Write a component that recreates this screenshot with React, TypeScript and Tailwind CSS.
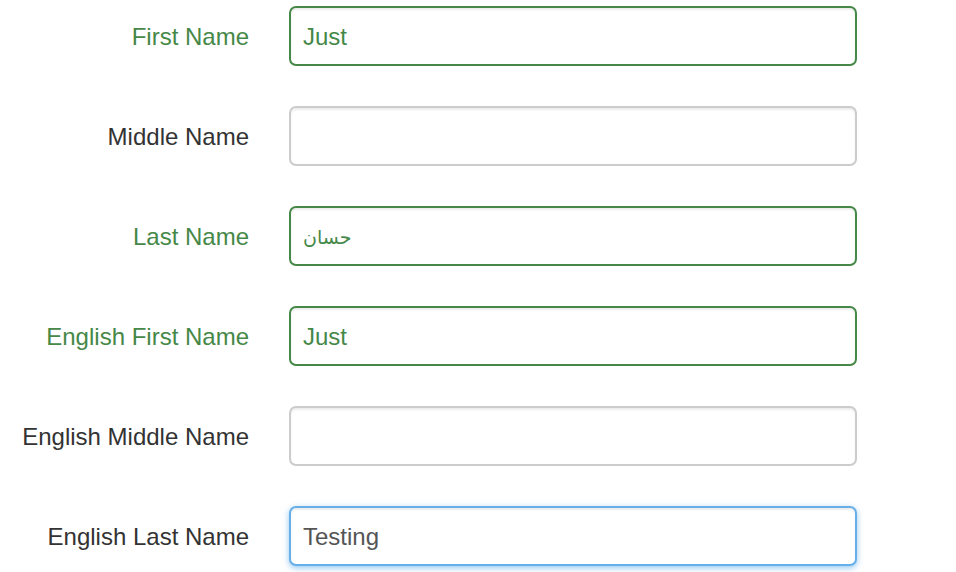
const fields = [
  { label: "First Name", value: "Just", state: "success" },
  { label: "Middle Name", value: "", state: "default" },
  { label: "Last Name", value: "حسان", state: "success", rtlText: true },
  { label: "English First Name", value: "Just", state: "success" },
  { label: "English Middle Name", value: "", state: "default" },
  { label: "English Last Name", value: "Testing", state: "focus" },
];

export default function App() {
  return (
    <div className="w-[956px] h-[572px] overflow-hidden bg-white pt-[6px] font-['Liberation_Sans','DejaVu_Sans',sans-serif]">
      <form className="flex flex-col gap-[40px]">
        {fields.map((f) => {
          const labelColor = f.state === "success" ? "text-[#468847]" : "text-[#333333]";
          const inputCls =
            f.state === "success"
              ? "border-[#468847] text-[#468847] shadow-[inset_0_2px_2px_rgba(0,0,0,0.075)]"
              : f.state === "focus"
              ? "border-[#66afe9] text-[#555555] shadow-[inset_0_2px_2px_rgba(0,0,0,0.075),0_2px_6px_rgba(102,175,233,0.7)]"
              : "border-[#cccccc] text-[#555555] shadow-[inset_0_2px_2px_rgba(0,0,0,0.075)]";
          return (
            <div key={f.label} className="flex items-center h-[60px]">
              <label className={`w-[249px] text-right text-[24px] leading-none pt-[2px] ${labelColor}`}>{f.label}</label>
              <input
                readOnly
                value={f.value}
                className={`ml-[40px] w-[568px] h-[60px] rounded-[7px] border-2 bg-white px-[12px] pt-[2px] ${f.rtlText ? "text-[19px]" : "text-[24px]"} outline-none font-['Liberation_Sans','DejaVu_Sans',sans-serif] ${inputCls}`}
              />
            </div>
          );
        })}
      </form>
    </div>
  );
}
